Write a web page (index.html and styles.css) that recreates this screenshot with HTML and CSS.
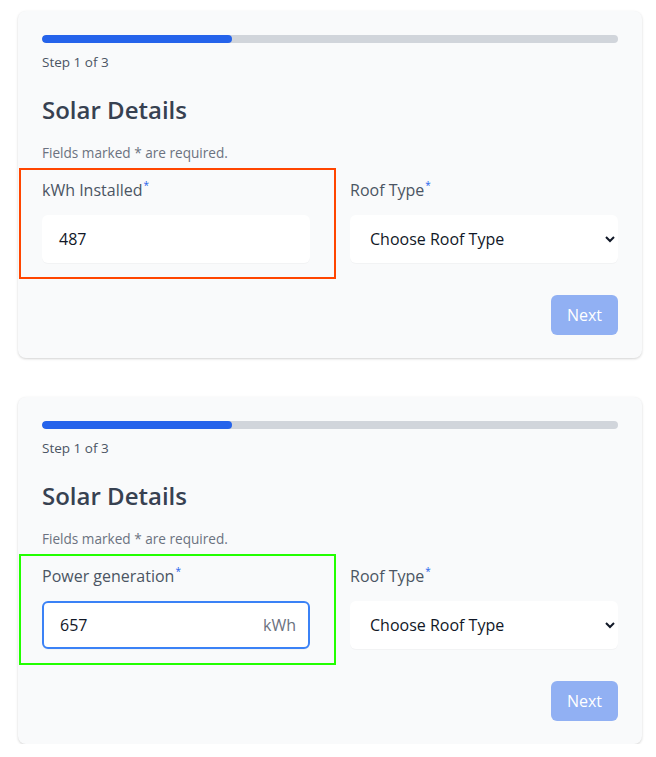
FILE: index.html
```html
<!DOCTYPE html>
<html lang="en">
<head>
<meta charset="utf-8">
<title>Solar Details</title>
<link rel="stylesheet" href="styles.css">
</head>
<body>
<div class="page">
  <section class="card">
    <div class="progress"><div class="progress-fill" style="width:33%"></div></div>
    <p class="step">Step 1 of 3</p>
    <h2 class="title">Solar Details</h2>
    <p class="note">Fields marked * are required.</p>
    <div class="grid">
      <div class="field highlight-orange">
        <label class="label">kWh Installed<sup class="req">*</sup></label>
        <div class="input-box"><span class="value">487</span></div>
      </div>
      <div class="field">
        <label class="label">Roof Type<sup class="req">*</sup></label>
        <select class="select"><option>Choose Roof Type</option></select>
      </div>
    </div>
    <div class="actions"><button class="btn">Next</button></div>
  </section>

  <section class="card">
    <div class="progress"><div class="progress-fill" style="width:33%"></div></div>
    <p class="step">Step 1 of 3</p>
    <h2 class="title">Solar Details</h2>
    <p class="note">Fields marked * are required.</p>
    <div class="grid">
      <div class="field highlight-green">
        <label class="label">Power generation<sup class="req">*</sup></label>
        <div class="input-box focused"><span class="value">657</span><span class="suffix">kWh</span></div>
      </div>
      <div class="field">
        <label class="label">Roof Type<sup class="req">*</sup></label>
        <select class="select"><option>Choose Roof Type</option></select>
      </div>
    </div>
    <div class="actions"><button class="btn">Next</button></div>
  </section>
</div>
</body>
</html>
```
FILE: styles.css
```css
* { box-sizing: border-box; }
html, body { margin: 0; padding: 0; background: #ffffff; }
body { font-family: "Open Sans", Lato, sans-serif; color: #4b5563; }
.page {
  display: flex;
  flex-direction: column;
  gap: 39px;
  padding: 11px 14px 0 18px;
}
.card {
  width: 624px;
  background: #f9fafb;
  border-radius: 8px;
  box-shadow: 0 1px 3px rgba(0,0,0,0.12), 0 1px 2px rgba(0,0,0,0.06);
  padding: 24px 24px 23px 24px;
}
.progress {
  height: 8px;
  background: #d1d5db;
  border-radius: 4px;
  overflow: hidden;
}
.progress-fill {
  height: 100%;
  background: #2563eb;
  border-radius: 4px;
}
.step {
  margin: 9px 0 0;
  font-size: 13.5px;
  line-height: 20px;
  color: #4b5563;
}
.title {
  margin: 22px 0 0;
  font-size: 24px;
  line-height: 32px;
  font-weight: 600;
  color: #374151;
}
.note {
  margin: 17px 0 0;
  font-size: 13.6px;
  line-height: 20px;
  color: #6b7280;
}
.grid {
  display: grid;
  grid-template-columns: 1fr 1fr;
  column-gap: 40px;
  margin-top: 15px;
}
.field {
  position: relative;
  display: flex;
  flex-direction: column;
  gap: 13px;
}
.highlight-orange::before,
.highlight-green::before {
  content: "";
  position: absolute;
  left: -23px;
  right: -26px;
  top: -10px;
  bottom: -16px;
  border: 2px solid #ff4500;
  pointer-events: none;
}
.highlight-green::before { border-color: #22ff00; }
.label {
  font-size: 16px;
  line-height: 24px;
  color: #4b5563;
}
.req {
  color: #2563eb;
  font-size: 10px;
  vertical-align: top;
  line-height: 14px;
  margin-left: 1px;
}
.input-box {
  display: flex;
  align-items: center;
  justify-content: space-between;
  height: 48px;
  background: #ffffff;
  border-radius: 6px;
  padding: 0 14px 0 17px;
  box-shadow: 0 1px 1px rgba(0,0,0,0.03);
}
.input-box.focused {
  border: 2px solid #3b82f6;
  padding: 0 12px 0 16px;
}
.value {
  font-size: 16px;
  color: #111827;
}
.suffix {
  font-size: 16px;
  color: #6b7280;
}
.select {
  height: 48px;
  width: 100%;
  background: #ffffff;
  border: none;
  border-radius: 6px;
  padding: 0 4px 0 16px;
  font-family: "Open Sans", Lato, sans-serif;
  font-size: 16px;
  color: #111827;
  box-shadow: 0 1px 1px rgba(0,0,0,0.03);
}
.actions {
  display: flex;
  justify-content: flex-end;
  margin-top: 32px;
}
.btn {
  height: 40px;
  padding: 0 16px;
  border: none;
  border-radius: 6px;
  background: #91b0f3;
  color: #ffffff;
  font-family: "Open Sans", Lato, sans-serif;
  font-size: 16px;
}
```
